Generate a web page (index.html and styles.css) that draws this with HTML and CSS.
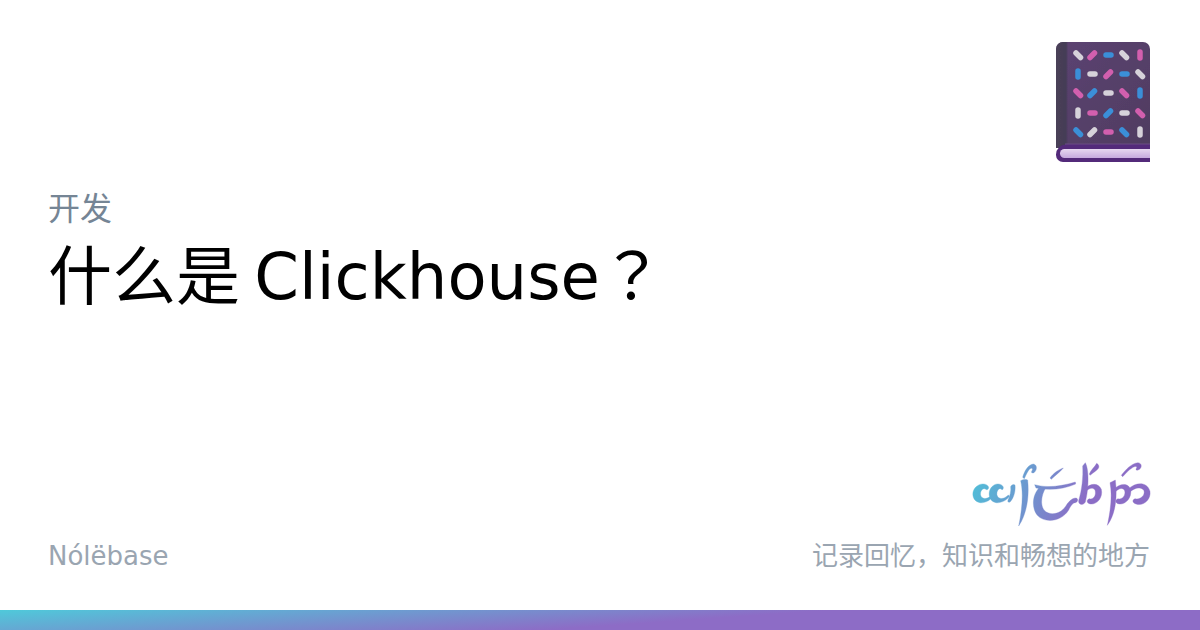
FILE: index.html
```html
<!DOCTYPE html>
<html lang="zh-CN">
<head>
<meta charset="utf-8">
<title>什么是 Clickhouse？</title>
<link rel="stylesheet" href="styles.css">
</head>
<body>
<div class="card">
  <main class="content">
    <header class="top">
      <svg class="book" viewBox="0 0 94 120" width="94" height="120" aria-hidden="true">
        <defs>
          <linearGradient id="cover" x1="0" y1="0" x2="1" y2="1">
            <stop offset="0" stop-color="#5c4372"/>
            <stop offset="1" stop-color="#4f3c60"/>
          </linearGradient>
          <linearGradient id="spine" x1="0" y1="0" x2="1" y2="0">
            <stop offset="0" stop-color="#4a4058"/>
            <stop offset="0.8" stop-color="#443c56"/>
            <stop offset="1" stop-color="#4d3c60"/>
          </linearGradient>
          <linearGradient id="pages" x1="0" y1="0" x2="0" y2="1">
            <stop offset="0" stop-color="#e6d8f0"/>
            <stop offset="1" stop-color="#c6aade"/>
          </linearGradient>
          <filter id="soft" x="-5%" y="-5%" width="110%" height="110%">
            <feGaussianBlur stdDeviation="0.35"/>
          </filter>
        </defs>
        <g filter="url(#soft)">
          <path d="M7 0H87a7 7 0 0 1 7 7V106H0V7a7 7 0 0 1 7-7Z" fill="url(#cover)"/>
          <path d="M7 0H11.500V106H0V7a7 7 0 0 1 7-7Z" fill="url(#spine)"/>
          <path d="M94 101.500H9V103H94Z" fill="#6b4d84"/>
          <path d="M94 102.500H10a10 10 0 0 0-10 10V113a7 7 0 0 0 7 7H94Z" fill="#52297a"/>
          <path d="M94 107H8.500a4 4 0 0 0 0 9H94Z" fill="url(#pages)"/>
          <g class="dots white">
            <line x1="20" y1="11" x2="24.500" y2="15.500"/><line x1="66" y1="11" x2="70.500" y2="15.500"/>
            <line x1="34" y1="32" x2="39" y2="32"/><line x1="82" y1="30" x2="86.500" y2="34.500"/>
            <line x1="50" y1="51" x2="55" y2="51"/>
            <line x1="22" y1="68" x2="22" y2="74"/><line x1="66" y1="71" x2="71" y2="71"/>
            <line x1="34" y1="92.500" x2="38.500" y2="88"/><line x1="84" y1="87" x2="84" y2="93"/>
          </g>
          <g class="dots pink">
            <line x1="34" y1="15.500" x2="38.500" y2="11"/><line x1="84" y1="10" x2="84" y2="16"/>
            <line x1="50" y1="34.500" x2="54.500" y2="30"/>
            <line x1="20" y1="49" x2="24.500" y2="53.500"/><line x1="66" y1="49" x2="70.500" y2="53.500"/>
            <line x1="34" y1="71" x2="39" y2="71"/><line x1="82" y1="69" x2="86.500" y2="73.500"/>
            <line x1="50" y1="90" x2="55" y2="90"/>
          </g>
          <g class="dots blue">
            <line x1="50" y1="13" x2="55" y2="13"/>
            <line x1="22" y1="29" x2="22" y2="35"/><line x1="66" y1="32" x2="71" y2="32"/>
            <line x1="34" y1="53.500" x2="38.500" y2="49"/><line x1="84" y1="48" x2="84" y2="54"/>
            <line x1="50" y1="73.500" x2="54.500" y2="69"/>
            <line x1="20" y1="88" x2="24.500" y2="92.500"/><line x1="66" y1="88" x2="70.500" y2="92.500"/>
          </g>
        </g>
      </svg>
    </header>
    <section class="headline">
      <div class="category">开发</div>
      <h1 class="title">什么是<span class="cjk"> </span>Clickhouse<span class="cjk-q" lang="ja">？</span></h1>
    </section>
    <footer class="bottom">
      <span class="site">Nólëbase</span>
      <div class="brand">
        <svg class="logo" viewBox="0 0 600 270" width="200" height="90" aria-label="Nólëbase">
          <defs>
            <linearGradient id="lg" gradientUnits="userSpaceOnUse" x1="40" y1="70" x2="350" y2="200">
              <stop offset="0" stop-color="#4fc0d8"/>
              <stop offset="1" stop-color="#8b6dc6"/>
            </linearGradient>
          </defs>
          <g class="tengwar">
            <path d="M86 112C84 103 70 99 58 104C43 111 37 124 39 137C41 153 58 162 73 157C83 155 91 149 97 141L93 138C85 144 77 147 71 145C63 143 60 136 62 127C64 119 70 114 76 117C80 121 86 119 86 112Z"/>
            <path d="M130 112C128 103 114 99 104 104C91 111 86 124 88 137C90 153 106 162 121 157C131 155 141 149 149 139L145 135C136 144 127 147 120 145C113 143 109 136 111 127C113 119 118 114 123 117C127 121 130 119 130 112Z"/>
            <path d="M152 110C154 105 160 101 165 105C167 120 163 142 151 155C146 159 142 156 144 150C150 138 154 122 152 110Z"/>
            <path d="M182 92C188 89 195 87 203 90C208 134 202 190 176 228C184 190 192 134 182 92Z"/>
            <path d="M188 82C194 62 204 44 220 42C232 44 232 60 222 68C216 70 212 68 216 62C220 56 216 52 210 56C204 62 198 74 193 86Z"/>
            <path d="M270 84C282 68 294 60 310 54C300 66 286 76 274 88Z"/>
            <path d="M224 104C260 114 300 110 346 96L347 102C310 118 270 122 228 114Z"/>
            <path d="M240 110C216 134 214 174 232 196C254 220 304 216 326 180C332 168 338 158 346 158C354 156 356 146 348 144C334 144 324 158 316 170C300 194 268 198 252 180C240 164 244 134 258 112Z"/>
            <path d="M376 38C388 60 386 120 376 156C370 168 354 164 356 152C366 120 370 80 368 48Z"/>
            <path d="M372 118C390 100 414 96 424 118C430 144 410 164 392 162C380 160 378 150 388 146C400 150 410 136 405 120C398 110 384 116 374 128Z"/>
            <path d="M388 72C392 60 404 52 410 40C420 46 418 56 408 62C402 68 396 70 390 76Z"/>
            <path d="M450 98L466 90C472 140 468 190 442 226C450 190 458 140 450 98Z"/>
            <path d="M462 118C478 100 506 96 512 120C516 144 496 164 478 162C466 160 464 150 474 146C486 150 498 136 494 122C488 110 474 116 464 128Z"/>
            <path d="M506 116C526 98 560 92 570 124C574 150 548 170 528 162C516 158 516 148 526 146C538 150 556 138 552 122C544 108 522 114 510 126Z"/>
            <path d="M484 76C496 60 514 40 534 38C548 40 546 56 534 60C528 62 526 58 530 54C532 48 524 48 516 54C506 60 496 72 488 80Z"/>
          </g>
        </svg>
        <span class="tagline">记录回忆，知识和畅想的地方</span>
      </div>
    </footer>
  </main>
  <div class="bar"></div>
</div>
</body>
</html>
```

FILE: styles.css
```css
* { box-sizing: border-box; }

html, body {
  margin: 0;
  padding: 0;
  background: #fff;
}

body {
  font-family: "DejaVu Sans", "Noto Sans CJK SC", sans-serif;
}

.card {
  width: 1200px;
  height: 630px;
  display: flex;
  flex-direction: column;
  overflow: hidden;
}

.content {
  flex: 1;
  padding: 42px 50px 38px 48px;
  display: flex;
  flex-direction: column;
}

.top {
  display: flex;
  justify-content: flex-end;
  height: 120px;
}

.book { display: block; }

.dots line {
  stroke-width: 5.500;
  stroke-linecap: round;
}
.white line { stroke: #d6d2da; }
.pink line { stroke: #d25fae; }
.blue line { stroke: #3a8fd8; }

.headline {
  margin-top: 28px;
  flex: 1;
}

.category {
  font-size: 32px;
  line-height: 38px;
  color: #758595;
}

.title {
  margin: 5px 0 0;
  font-size: 64px;
  line-height: 76px;
  font-weight: 400;
  color: #000;
}

.cjk {
  font-family: "Noto Sans CJK SC", sans-serif;
}

.cjk-q {
  font-family: "Noto Sans CJK JP", sans-serif;
}

.bottom {
  display: flex;
  justify-content: space-between;
  align-items: flex-end;
}

.site {
  font-size: 26px;
  line-height: 32px;
  color: #9aa5b1;
}

.brand {
  display: flex;
  flex-direction: column;
  align-items: flex-end;
}

.logo {
  display: block;
  margin-right: -10px;
}

.tagline {
  font-size: 26px;
  line-height: 32px;
  color: #9aa5b1;
}

.tengwar path {
  fill: url(#lg);
  stroke: url(#lg);
  stroke-width: 1;
  stroke-linejoin: round;
}

.bar {
  height: 20px;
  flex: none;
  background: linear-gradient(176deg, #4fc9da 0%, #8d6cc6 56%, #8d6cc6 100%);
}
```
